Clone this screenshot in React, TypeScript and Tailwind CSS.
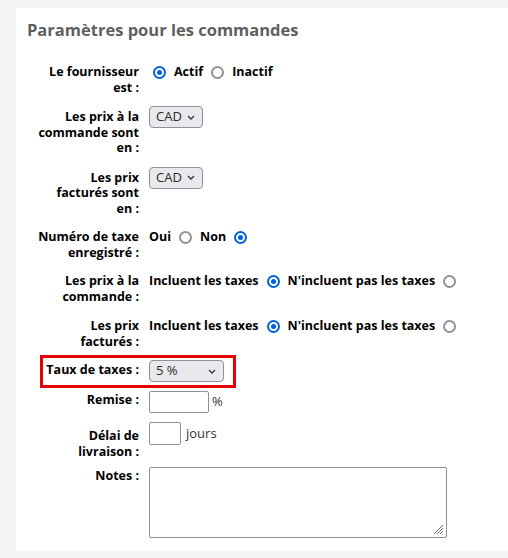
import React from 'react';

const font = { fontFamily: '"Open Sans", "Noto Sans", sans-serif' };

const Radio = ({ checked }: { checked?: boolean }) =>
  checked ? (
    <span className="inline-flex h-[13px] w-[13px] shrink-0 items-center justify-center rounded-full border-[2px] border-[#0060df] bg-white">
      <span className="h-[5px] w-[5px] rounded-full bg-[#0060df]" />
    </span>
  ) : (
    <span className="inline-block h-[13px] w-[13px] shrink-0 rounded-full border-[2px] border-[#8f8f9d] bg-white" />
  );

const Select = ({ value, width }: { value: string; width: string }) => (
  <div
    className={`flex h-[22px] ${width} items-center justify-between rounded-[4px] border border-[#8f8f9d] bg-[#e9e9ed] pl-[6px] pr-[7px] text-[13px] font-normal text-[#2b2b2b]`}
  >
    <span>{value}</span>
    <svg width="8" height="5" viewBox="0 0 8 5" fill="none">
      <path d="M1 1l3 3 3-3" stroke="#333" strokeWidth="1.3" />
    </svg>
  </div>
);

const Label = ({ children, className = '' }: { children: React.ReactNode; className?: string }) => (
  <div className={`w-[123px] shrink-0 text-right text-[12.5px] font-bold leading-[15.5px] text-black ${className}`}>
    {children}
  </div>
);

export default function App() {
  return (
    <div className="min-h-[558px] bg-[#f2f3f3] pt-[8px] pl-[16px]" style={font}>
      <div className="bg-white pt-[10px] pb-[13px]">
        <h2 className="pl-[11px] text-[16.5px] font-bold leading-[24px] text-[#5f5f5f]">
          Paramètres pour les commandes
        </h2>

        <div className="mt-[22px] flex gap-[10px]">
          <Label>
            Le fournisseur
            <br />
            est :
          </Label>
          <div className="flex h-[16px] items-center gap-[8px] pl-[4px] text-[12.5px] font-bold">
            <Radio checked />
            <span>Actif</span>
            <Radio />
            <span>Inactif</span>
          </div>
        </div>

        <div className="mt-[11px] flex gap-[10px]">
          <Label className="pt-[3px]">
            Les prix à la
            <br />
            commande sont
            <br />
            en :
          </Label>
          <Select value="CAD" width="w-[54px]" />
        </div>

        <div className="mt-[11px] flex gap-[10px]">
          <Label className="pt-[3px]">
            Les prix
            <br />
            facturés sont
            <br />
            en :
          </Label>
          <Select value="CAD" width="w-[54px]" />
        </div>

        <div className="mt-[13px] flex gap-[10px]">
          <Label>
            Numéro de taxe
            <br />
            enregistré :
          </Label>
          <div className="flex h-[16px] items-center gap-[8px] text-[12.5px] font-bold">
            <span>Oui</span>
            <Radio />
            <span>Non</span>
            <Radio checked />
          </div>
        </div>

        <div className="mt-[13px] flex gap-[10px]">
          <Label>
            Les prix à la
            <br />
            commande :
          </Label>
          <div className="flex h-[16px] items-center gap-[8px] text-[12.5px] font-bold">
            <span>Incluent les taxes</span>
            <Radio checked />
            <span>N'incluent pas les taxes</span>
            <Radio />
          </div>
        </div>

        <div className="mt-[14px] flex gap-[10px]">
          <Label>
            Les prix
            <br />
            facturés :
          </Label>
          <div className="flex h-[16px] items-center gap-[8px] text-[12.5px] font-bold">
            <span>Incluent les taxes</span>
            <Radio checked />
            <span>N'incluent pas les taxes</span>
            <Radio />
          </div>
        </div>

        <div className="mt-[6px] ml-[24px] flex w-fit gap-[10px] border-[3px] border-[#e60000] pt-[2px] pb-[3px] pr-[9px]">
          <div className="w-[96px] shrink-0 pt-[2px] text-right text-[12.5px] font-bold leading-[15.5px] text-black">
            Taux de taxes :
          </div>
          <Select value="5 %" width="w-[75px]" />
        </div>

        <div className="mt-[3px] flex gap-[10px]">
          <Label className="pt-[1px]">Remise :</Label>
          <div className="flex items-center gap-[3px] text-[13px] text-[#333]">
            <div className="h-[22px] w-[60px] rounded-[2px] border border-[#8f8f9d] bg-white" />
            <span>%</span>
          </div>
        </div>

        <div className="mt-[9px] flex gap-[10px]">
          <Label className="pt-[6px]">
            Délai de
            <br />
            livraison :
          </Label>
          <div className="flex h-[23px] items-center gap-[5px] text-[13px] text-[#333]">
            <div className="h-[23px] w-[32px] rounded-[2px] border border-[#8f8f9d] bg-white" />
            <span>jours</span>
          </div>
        </div>

        <div className="mt-[8px] flex gap-[10px]">
          <Label className="pt-[1px]">Notes :</Label>
          <div className="relative h-[71px] w-[298px] rounded-[2px] border border-[#8f8f9d] bg-white">
            <svg className="absolute right-[2px] bottom-[2px]" width="12" height="12" viewBox="0 0 12 12">
              <path d="M11 2L2 11M11 5L5 11M11 8L8 11" stroke="#6b6b6b" strokeWidth="1" />
            </svg>
          </div>
        </div>
      </div>
    </div>
  );
}
